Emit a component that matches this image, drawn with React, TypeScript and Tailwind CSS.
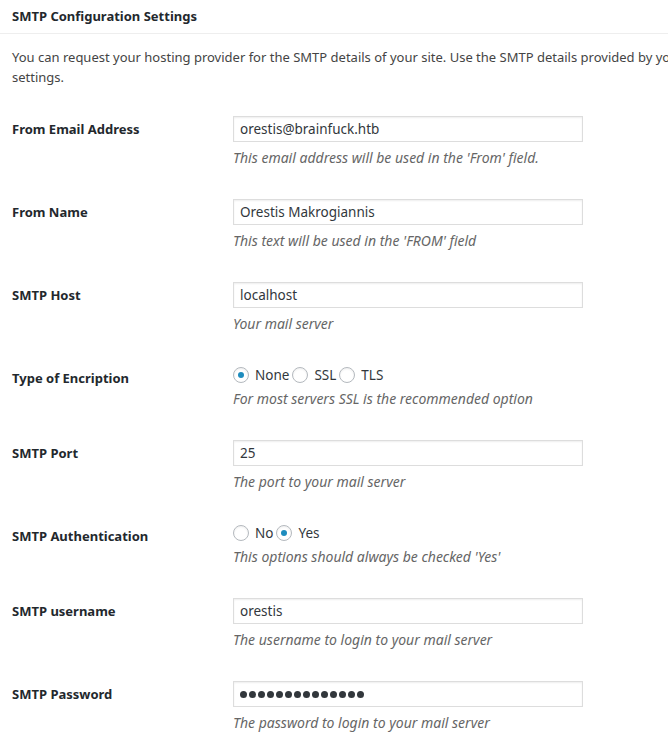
import { FunctionComponent } from "react";

type Row =
  | { kind: "text"; label: string; value: string; desc: string; password?: boolean }
  | { kind: "radio"; label: string; options: string[]; checked: number; desc: string };

const rows: Row[] = [
  {
    kind: "text",
    label: "From Email Address",
    value: "orestis@brainfuck.htb",
    desc: "This email address will be used in the 'From' field.",
  },
  {
    kind: "text",
    label: "From Name",
    value: "Orestis Makrogiannis",
    desc: "This text will be used in the 'FROM' field",
  },
  { kind: "text", label: "SMTP Host", value: "localhost", desc: "Your mail server" },
  {
    kind: "radio",
    label: "Type of Encription",
    options: ["None", "SSL", "TLS"],
    checked: 0,
    desc: "For most servers SSL is the recommended option",
  },
  { kind: "text", label: "SMTP Port", value: "25", desc: "The port to your mail server" },
  {
    kind: "radio",
    label: "SMTP Authentication",
    options: ["No", "Yes"],
    checked: 1,
    desc: "This options should always be checked 'Yes'",
  },
  {
    kind: "text",
    label: "SMTP username",
    value: "orestis",
    desc: "The username to login to your mail server",
  },
  {
    kind: "text",
    label: "SMTP Password",
    value: "**************",
    desc: "The password to login to your mail server",
    password: true,
  },
];

const Radio: FunctionComponent<{ on: boolean }> = ({ on }) => (
  <span className="w-4 h-4 rounded-full border border-[#b4b9be] bg-white shadow-[inset_0_1px_2px_rgba(0,0,0,0.07)] flex items-center justify-center shrink-0">
    {on && <span className="w-[6px] h-[6px] rounded-full bg-[#1e8cbe]" />}
  </span>
);

const App: FunctionComponent = () => {
  return (
    <div
      className="w-[668px] h-[746px] overflow-hidden bg-white text-[#444]"
      style={{ fontFamily: "'Noto Sans', sans-serif" }}
    >
      <div className="w-[1040px]">
        <h3 className="px-3 h-[34px] flex items-center text-[13px] font-bold text-[#23282d] border-b border-[#eee]">
          SMTP Configuration Settings
        </h3>
        <p className="px-3 pt-[13px] text-[13px] leading-[20px]">
          You can request your hosting provider for the SMTP details of your site. Use the SMTP details
          provided by your hosting provider to configure the following
          <br />
          settings.
        </p>
        <div className="px-3 pt-[13px]">
          {rows.map((row) => (
            <div
              key={row.label}
              className={`flex ${row.kind === "text" ? "h-[83px]" : "h-[75px]"}`}
            >
              <div className="w-[221px] shrink-0 pt-[19px] text-[13px] leading-[20px] font-bold text-[#23282d]">
                {row.label}
              </div>
              <div className="pt-[16px]">
                {row.kind === "text" ? (
                  <div className="w-[350px] h-[26px] border border-[#ddd] shadow-[inset_0_1px_2px_rgba(0,0,0,0.07)] px-[6px] flex items-center text-[13.5px] text-[#32373c]">
                    {row.password ? (
                      <span className="flex gap-[2px]">
                        {row.value.split("").map((_, i) => (
                          <span key={i} className="w-[7px] h-[7px] rounded-full bg-[#32373c]" />
                        ))}
                      </span>
                    ) : (
                      row.value
                    )}
                  </div>
                ) : (
                  <div className="h-[20px] flex items-center text-[13.5px] text-[#32373c]">
                    {row.options.map((opt, i) => (
                      <span key={opt} className="flex items-center">
                        <Radio on={i === row.checked} />
                        <span className="ml-[6px] mr-[3px]">{opt}</span>
                      </span>
                    ))}
                  </div>
                )}
                <p
                  className={`${row.kind === "text" ? "mt-[6px]" : "mt-[4px]"} text-[14px] leading-[20px] italic text-[#666]`}
                >
                  {row.desc}
                </p>
              </div>
            </div>
          ))}
        </div>
      </div>
    </div>
  );
};

export default App;
